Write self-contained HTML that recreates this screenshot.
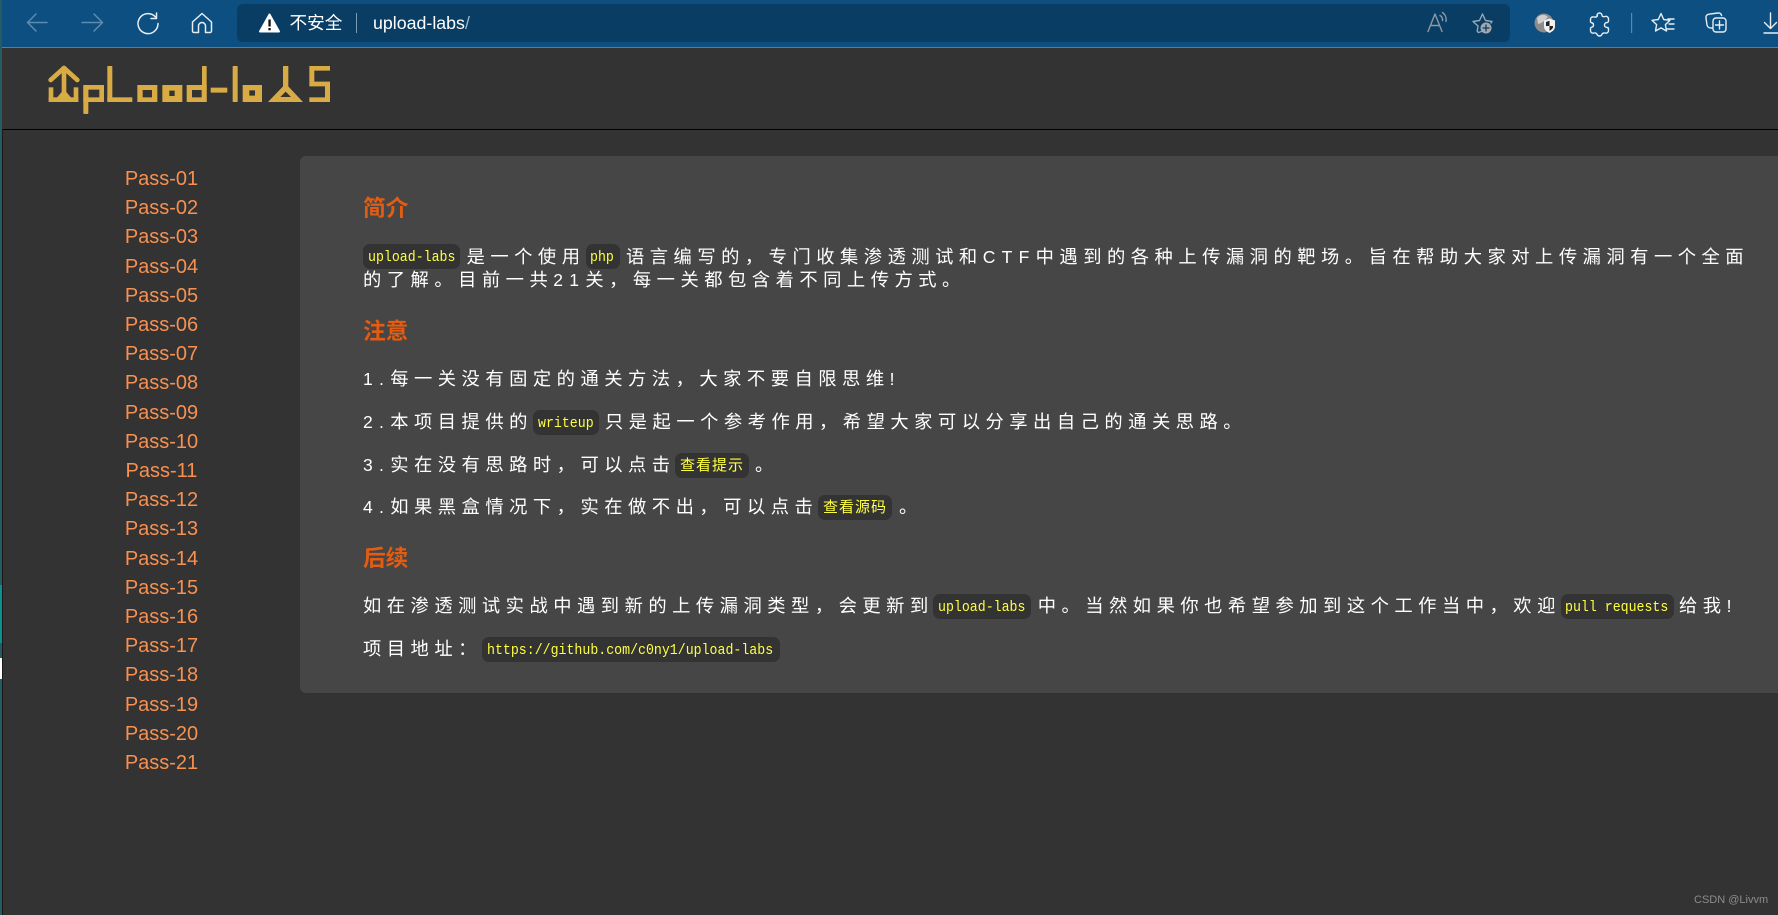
<!DOCTYPE html>
<html lang="zh-CN">
<head>
<meta charset="utf-8">
<title>upload-labs</title>
<style>
html,body{margin:0;padding:0;width:1778px;height:915px;overflow:hidden;background:#333;}
body{position:relative;font-family:"Liberation Sans","Noto Sans CJK SC",sans-serif;}
.abs{position:absolute;}
#strip{left:0;top:0;width:2px;height:915px;background:#265c61;}
#strip1{left:0;top:585px;width:2px;height:58px;background:#0f9090;}
#strip2{left:0;top:658px;width:2px;height:21px;background:#fff;}
#bar{left:2px;top:0;width:1776px;height:47px;background:#0c4f80;}
#barline{left:2px;top:47px;width:1776px;height:1px;background:#4f7fa8;}
#addr{left:237px;top:4px;width:1273px;height:38px;background:#0a3d63;border-radius:6px;}
#rule{left:2px;top:129px;width:1776px;height:1px;background:#000;}
#ruleL{left:2px;top:129px;width:1px;height:786px;background:#1a1a1a;}
#card{left:300px;top:156px;width:1478px;height:537px;background:#464646;border-radius:6px 0 0 6px;}
.nav{left:61.500px;width:200px;text-align:center;font-size:20px;line-height:29px;height:29px;color:#f89050;white-space:nowrap;}
.h{left:363px;font-size:22.7px;font-weight:bold;line-height:30px;height:30px;color:#e35c12;white-space:nowrap;}
.t{font-size:18.3px;letter-spacing:5.5px;line-height:24px;height:24px;color:#fff;white-space:nowrap;}
.d{font-size:17.5px;letter-spacing:6.3px;}
.c{background:#333;border-radius:7px;height:25px;}
.m{font-family:"Liberation Mono","Noto Sans CJK SC",monospace;font-size:15px;line-height:25px;height:25px;margin-top:1px;color:#ffff44;white-space:nowrap;transform:scaleX(.883);transform-origin:0 50%;}
.z{font-size:15px;letter-spacing:1px;line-height:25px;height:25px;color:#ffff44;white-space:nowrap;}
</style>
</head>
<body>
<div class="abs" id="strip"></div><div class="abs" id="strip1"></div><div class="abs" id="strip2"></div>
<div class="abs" id="bar"></div><div class="abs" id="barline"></div><div class="abs" id="addr"></div>

<svg class="abs" style="left:0;top:0" width="1778" height="48" viewBox="0 0 1778 48" fill="none" stroke-linecap="round" stroke-linejoin="round">
  <g stroke="#5e8cb0" stroke-width="1.5">
    <path d="M47 22.5H28M36 14l-8.500 8.500L36 31"/>
    <path d="M82 22.500h20M94 14l8.500 8.500L94 31"/>
  </g>
  <g stroke="#e6eef4" stroke-width="1.500">
    <path d="M155.500 17a10 10 0 1 0 2.500 6.500"/>
    <path d="M156.500 13v5.500H151"/>
    <path d="M202 13.500l-9.500 8.500v9a1.500 1.500 0 0 0 1.500 1.500h4.500v-6.500a3.500 3.500 0 0 1 7 0v6.500h4.500a1.500 1.500 0 0 0 1.500-1.500v-9z"/>
  </g>
  <path d="M269.500 14.500L279 31.500H260z" fill="#fff" stroke="#fff" stroke-width="2"/>
  <rect x="268.400" y="19.500" width="2.300" height="7" fill="#111"/>
  <rect x="268.400" y="28" width="2.300" height="2.300" fill="#111"/>
  <rect x="356" y="13" width="1" height="20" fill="#7b9ab3"/>

  <g stroke="#8a9aa8" stroke-width="1.400">
    <path d="M1428 31.500l7-17.500 7 17.500M1430.500 25.500h9"/>
    <path d="M1440 15.500a5 5 0 0 1 2.500 5M1442.500 12.500a9 9 0 0 1 3.500 9"/>
    <path d="M1483 31l-4.500 1.500-1.300-1 .8-5.500-5-4.500 6.500-1 3-6.500 3 6.500 6.500 1-1 1.500" stroke="#97a6b2"/>
  </g>
  <circle cx="1486" cy="28" r="5.500" fill="#a3a8ad"/>
  <path d="M1486 25v6M1483 28h6" stroke="#0a3d63" stroke-width="1.300"/>

  <circle cx="1544" cy="23" r="9.500" fill="#8c8c8c"/>
  <path d="M1537 18c3-4 8-4 11-1-2 2-5 6-10 7z" fill="#cfcfcf"/>
  <path d="M1544 20.500l5.500-2 5.500 2v6c0 3-2.500 5-5.500 6.500-3-1.500-5.500-3.500-5.500-6.500z" fill="#f2f2f2"/>
  <path d="M1546 22l3.500-1.300v5.300H1546zM1549.500 26h3.500v1c0 1.500-1.800 3-3.500 3.800z" fill="#222"/>

  <g stroke="#e6eef4" stroke-width="1.400">
    <path d="M1597 15.500c0-1.500 1-2.500 2.500-2.500s2.500 1 2.500 2.500c0 1 1.500 1.500 3 1s3.500 .5 3.500 2.500v2c0 1.500-1.500 1.500-1.500 1.500-1.500 0-2.500 1-2.500 2.500s1 2.500 2.500 2.500c1 0 1.500 .5 1.500 1.500v1.500c0 2-1.500 3-3.500 2.500-1.500-.3-2.500 0-3 1.300-.5 1-1.500 1.700-2.500 1.700s-2-.7-2.500-1.700c-.5-1.300-1.500-1.600-3-1.300-2 .5-3.500-.5-3.500-2.500v-2c0-1 1.500-1.500 1.500-1.500 1 0 1.500-1 1.500-2s-.5-2-1.500-2c0 0-1.500-.5-1.500-1.500v-2c0-2 1.500-3 3.500-2.500 1.500.3 3 0 3.500-1.500z"/>
    <path d="M1661 13.500l2.700 6 6.300.8-4.600 4.300 1.100 6.400-5.500-3.100-5.500 3.100 1.100-6.400-4.600-4.300 6.300-.8z"/>
    <path d="M1668 19h6M1669 24h5M1667 29h7"/>
    <path d="M1712 28h-1c-2.500 0-3.500-1-4-3l-1-7c-.3-2 .8-3.500 2.800-3.800l9-1.200c2-.2 3.400.8 3.800 2.600"/>
    <rect x="1713" y="18" width="13" height="14" rx="3"/>
    <path d="M1719.500 21v8M1715.500 25h8"/>
    <path d="M1770.500 13v15M1764.500 22.500l6 6 6-6M1764 33h14"/>
  </g>
  <rect x="1631" y="13" width="1.200" height="20" fill="#5a89ad"/>
</svg>

<div class="abs" style="left:289.500px;top:11px;font-size:17.600px;line-height:24px;color:#fff;white-space:nowrap;">不安全</div>
<div class="abs" style="left:373px;top:11px;font-size:17.800px;line-height:24px;color:#fff;white-space:nowrap;">upload-labs<span style="color:#9fb6c8">/</span></div>

<svg class="abs" style="left:30px;top:50px" width="320" height="80" viewBox="0 0 960 240" fill="#d8ab45" stroke="none">
  <g fill="none" stroke="#d8ab45" stroke-width="14" stroke-linecap="round" stroke-linejoin="round">
    <path d="M62 90L102 54L142 90"/>
  </g>
  <rect x="95" y="50" width="14" height="90"/>
  <path d="M95 126L78 146H126L109 126z"/>
  <rect x="56" y="112" width="14" height="43"/>
  <rect x="56" y="142" width="89" height="14"/>
  <rect x="131" y="112" width="14" height="43"/>

  <rect x="160" y="105" width="15" height="87" rx="3"/>
  <path fill-rule="evenodd" d="M160 105h62v51h-62zM175 119v23h33v-23z"/>
  <rect x="232" y="48" width="15" height="108" rx="2"/>
  <rect x="232" y="142" width="75" height="14"/>
  <path fill-rule="evenodd" d="M322 105h60v51h-60zM338 120v22h28v-22z"/>
  <path fill-rule="evenodd" d="M397 105h60v51h-60zM418 122v16h16v-16z"/>
  <path fill-rule="evenodd" d="M470 105h60v51h-60zM486 120v22h29v-22z"/>
  <rect x="516" y="48" width="14" height="108" rx="2"/>
  <rect x="542" y="113" width="50" height="15" rx="2"/>
  <rect x="608" y="48" width="15" height="108" rx="2"/>
  <path fill-rule="evenodd" d="M638 105h58v51h-58zM658 121v16h17v-16z"/>
  <rect x="759" y="48" width="16" height="70"/>
  <path fill-rule="evenodd" d="M767 101L819 156H714zM767 125L751 141H783z"/>
  <path d="M838 48h62v14h-47v33h47v61h-62v-14h47v-33h-47z"/>
</svg>

<div class="abs" id="rule"></div><div class="abs" id="ruleL"></div>

<div class="abs nav" style="top:165px">Pass-01</div>
<div class="abs nav" style="top:194.200px">Pass-02</div>
<div class="abs nav" style="top:223.400px">Pass-03</div>
<div class="abs nav" style="top:252.600px">Pass-04</div>
<div class="abs nav" style="top:281.800px">Pass-05</div>
<div class="abs nav" style="top:311px">Pass-06</div>
<div class="abs nav" style="top:340.200px">Pass-07</div>
<div class="abs nav" style="top:369.400px">Pass-08</div>
<div class="abs nav" style="top:398.600px">Pass-09</div>
<div class="abs nav" style="top:427.800px">Pass-10</div>
<div class="abs nav" style="top:457px">Pass-11</div>
<div class="abs nav" style="top:486.200px">Pass-12</div>
<div class="abs nav" style="top:515.400px">Pass-13</div>
<div class="abs nav" style="top:544.600px">Pass-14</div>
<div class="abs nav" style="top:573.800px">Pass-15</div>
<div class="abs nav" style="top:603px">Pass-16</div>
<div class="abs nav" style="top:632.200px">Pass-17</div>
<div class="abs nav" style="top:661.400px">Pass-18</div>
<div class="abs nav" style="top:690.600px">Pass-19</div>
<div class="abs nav" style="top:719.800px">Pass-20</div>
<div class="abs nav" style="top:749px">Pass-21</div>

<div class="abs" id="card"></div>

<div class="abs h" style="top:193px">简介</div>
<div class="abs c" style="left:363px;top:244px;width:97px"></div>
<div class="abs m" style="left:367.500px;top:244px">upload-labs</div>
<div class="abs t" style="left:466.600px;top:245px">是一个使用</div>
<div class="abs c" style="left:586px;top:244px;width:34px"></div>
<div class="abs m" style="left:590px;top:244px">php</div>
<div class="abs t" style="left:626px;top:245px">语言编写的，专门收集渗透测试和<span class="d">CTF</span>中遇到的各种上传漏洞的靶场。旨在帮助大家对上传漏洞有一个全面</div>
<div class="abs t" style="left:363px;top:268px">的了解。目前一共<span class="d">21</span>关，每一关都包含着不同上传方式。</div>

<div class="abs h" style="top:316px">注意</div>
<div class="abs t" style="left:363px;top:367px"><span class="d">1.</span>每一关没有固定的通关方法，大家不要自限思维<span class="d">!</span></div>
<div class="abs t" style="left:363px;top:410px"><span class="d">2.</span>本项目提供的</div>
<div class="abs c" style="left:533px;top:410px;width:66px"></div>
<div class="abs m" style="left:537.500px;top:410px">writeup</div>
<div class="abs t" style="left:605px;top:410px">只是起一个参考作用，希望大家可以分享出自己的通关思路。</div>
<div class="abs t" style="left:363px;top:453px"><span class="d">3.</span>实在没有思路时，可以点击</div>
<div class="abs c" style="left:675px;top:453px;width:74px"></div>
<div class="abs z" style="left:680px;top:453px">查看提示</div>
<div class="abs t" style="left:755px;top:453px">。</div>
<div class="abs t" style="left:363px;top:495px"><span class="d">4.</span>如果黑盒情况下，实在做不出，可以点击</div>
<div class="abs c" style="left:818px;top:495px;width:74px"></div>
<div class="abs z" style="left:823px;top:495px">查看源码</div>
<div class="abs t" style="left:899px;top:495px">。</div>

<div class="abs h" style="top:543px">后续</div>
<div class="abs t" style="left:363px;top:594px">如在渗透测试实战中遇到新的上传漏洞类型，会更新到</div>
<div class="abs c" style="left:933px;top:594px;width:98px"></div>
<div class="abs m" style="left:938px;top:594px">upload-labs</div>
<div class="abs t" style="left:1037.700px;top:594px">中。当然如果你也希望参加到这个工作当中，欢迎</div>
<div class="abs c" style="left:1561px;top:594px;width:112.500px"></div>
<div class="abs m" style="left:1565px;top:594px">pull requests</div>
<div class="abs t" style="left:1679px;top:594px">给我<span class="d">!</span></div>
<div class="abs t" style="left:363px;top:637px">项目地址：</div>
<div class="abs c" style="left:482px;top:637px;width:298px"></div>
<div class="abs m" style="left:486.500px;top:637px">https://github.com/c0ny1/upload-labs</div>

<div class="abs" style="left:1694px;top:893px;font-size:11px;line-height:14px;color:#8c8c8c;white-space:nowrap;">CSDN @Livvm</div>
</body>
</html>
